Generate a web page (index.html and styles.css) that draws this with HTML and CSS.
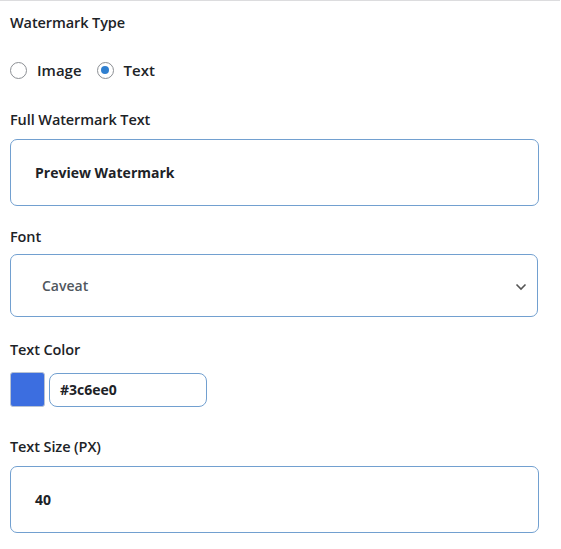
FILE: index.html
```html
<!DOCTYPE html>
<html>
<head>
<meta charset="utf-8">
<link rel="stylesheet" href="styles.css">
</head>
<body>
<div class="panel">
  <div class="field field-type">
    <div class="label">Watermark Type</div>
    <div class="radios">
      <label class="radio"><span class="dot"></span>Image</label>
      <label class="radio"><span class="dot checked"></span>Text</label>
    </div>
  </div>
  <div class="field field-text">
    <div class="label">Full Watermark Text</div>
    <div class="box input-lg"><span class="val">Preview Watermark</span></div>
  </div>
  <div class="field field-font">
    <div class="label">Font</div>
    <div class="box select"><span class="val muted">Caveat</span>
      <svg class="chev" width="12" height="8" viewBox="0 0 12 8"><path d="M1.5 1.5 L6 6 L10.5 1.5" fill="none" stroke="#555" stroke-width="1.6"/></svg>
    </div>
  </div>
  <div class="field field-color">
    <div class="label">Text Color</div>
    <div class="color-row">
      <span class="swatch"></span>
      <div class="box hex"><span class="val">#3c6ee0</span></div>
    </div>
  </div>
  <div class="field field-size">
    <div class="label">Text Size (PX)</div>
    <div class="box input-lg"><span class="val">40</span></div>
  </div>
</div>
</body>
</html>
```
FILE: styles.css
```css
html, body { margin: 0; padding: 0; background: #fff; }
body {
  font-family: "Open Sans", "Noto Sans", "Liberation Sans", sans-serif;
  color: #1d2327;
}
.panel {
  width: 560px;
  border-top: 1px solid #dcdcde;
  padding: 12px 10px 0;
  box-sizing: border-box;
}
.label {
  font-size: 14.5px;
  font-weight: 600;
  line-height: 20px;
  color: #1d2327;
  letter-spacing: -0.1px;
}
.field-type .radios {
  display: flex;
  align-items: center;
  margin-top: 27px;
  height: 20px;
  gap: 15px;
}
.radio {
  display: flex;
  align-items: center;
  gap: 10px;
  font-size: 15px;
  font-weight: 600;
}
.dot {
  width: 17px; height: 17px;
  border: 1px solid #8c8f94;
  border-radius: 50%;
  box-sizing: border-box;
  position: relative;
}
.dot.checked::after {
  content: "";
  position: absolute;
  left: 3.5px; top: 3.5px;
  width: 8px; height: 8px;
  border-radius: 50%;
  background: #2f7fd0;
}
.field-text { margin-top: 30px; }
.field-font { margin-top: 21px; }
.field-color { margin-top: 23px; }
.field-size { margin-top: 30px; }
.box {
  border: 1px solid #72a0d0;
  border-radius: 7px;
  box-sizing: border-box;
  display: flex;
  align-items: center;
  background: #fff;
}
.val { font-size: 14px; font-weight: 700; color: #1d2327; }
.val.muted { font-weight: 600; color: #50575e; }
.input-lg {
  width: 529px;
  height: 67px;
  margin-top: 9px;
  padding-left: 24px;
}
.select {
  width: 528px;
  height: 63px;
  margin-top: 7px;
  padding-left: 31px;
  padding-right: 10px;
  justify-content: space-between;
}
.chev { display: block; margin-top: 2px; }
.color-row {
  display: flex;
  align-items: center;
  gap: 4px;
  margin-top: 12px;
}
.swatch {
  width: 35px; height: 35px;
  background: #3c6ee0;
  border: 1px solid #b9c3d3;
  border-radius: 3px;
  box-sizing: border-box;
}
.hex {
  width: 158px;
  height: 34px;
  border-radius: 8px;
  padding-left: 10px;
}
.field-size .input-lg { margin-top: 9px; }
```
